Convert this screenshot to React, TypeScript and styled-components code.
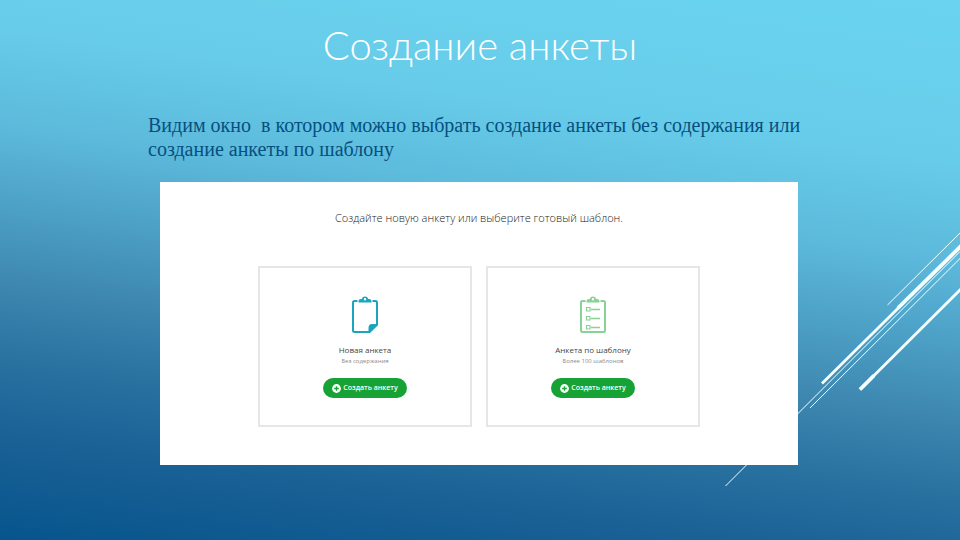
import React from "react";
import styled, { createGlobalStyle } from "styled-components";

const GlobalStyle = createGlobalStyle`
  *, *::before, *::after { box-sizing: border-box; }
  body { margin: 0; }
`;

const Slide = styled.main`
  position: relative;
  min-height: 100vh;
  overflow: hidden;
  padding: 21px 148px 24px;
  background: linear-gradient(
    188deg,
    #6ad4f0 0%,
    #67cce9 24%,
    #5cb9db 39%,
    #4c9fc5 51%,
    #3d87b0 62%,
    #28709f 74%,
    #175f94 87%,
    #06558d 100%
  );
`;

const Streaks = styled.svg`
  position: absolute;
  inset: 0;
  width: 100%;
  height: 100%;
  stroke: #f4ffff;
  fill: none;
`;

const Content = styled.div`
  position: relative;
`;

const Title = styled.h1`
  margin: 0;
  color: #ffffff;
  font: 300 40px/48px Lato, "Open Sans", sans-serif;
  text-align: center;
`;

const Lead = styled.p`
  margin: 44px 0 0;
  color: #06507f;
  font: 20px/24px "Liberation Serif", serif;
  white-space: pre-wrap;
`;

const Panel = styled.section`
  margin: 21px 14px 0 12px;
  padding: 28px 20px 38px;
  background: #ffffff;
  font-family: "Open Sans", "Noto Sans", sans-serif;
`;

const PanelTitle = styled.h2`
  margin: 0;
  color: #222222;
  font-size: 11px;
  line-height: 16px;
  font-weight: 300;
  text-align: center;
`;

const Cards = styled.div`
  display: grid;
  grid-template-columns: repeat(2, minmax(0, 214px));
  justify-content: center;
  gap: 14px;
  margin-top: 40px;
`;

const Card = styled.article`
  display: flex;
  flex-direction: column;
  align-items: center;
  padding: 28px 8px 27px;
  border: 2px solid #e6e6e6;
`;

const ClipIcon = styled.svg<{ $tone: string }>`
  width: 28px;
  height: 38px;
  color: ${(p) => p.$tone};
  stroke: currentColor;
  fill: none;
`;

const CardTitle = styled.h3`
  margin: 10px 0 0;
  color: #444444;
  font-size: 8px;
  line-height: 12px;
  font-weight: 400;
`;

const CardNote = styled.p`
  margin: 0;
  color: #8a8a8a;
  font-size: 6px;
  line-height: 10px;
`;

const CreateButton = styled.button`
  display: flex;
  align-items: center;
  justify-content: center;
  gap: 2px;
  width: 84px;
  height: 20px;
  margin-top: 12px;
  padding: 0;
  border: 0;
  border-radius: 10px;
  background: #17a235;
  color: #ffffff;
  font: 600 7px/12px "Open Sans", "Noto Sans", sans-serif;
  cursor: pointer;
`;

const PlusIcon = styled.svg`
  width: 9px;
  height: 9px;
`;

function Clip() {
  return (
    <path
      d="M7.500 6.500V5Q7.500 3 10 3H10.800A3.300 3.300 0 0 1 17.200 3H18Q20.500 3 20.500 5V6.500ZM14 2A1.200 1.200 0 1 0 14 4.400A1.200 1.200 0 1 0 14 2Z"
      fill="currentColor"
      fillRule="evenodd"
      stroke="none"
    />
  );
}

function BlankClipboard() {
  return (
    <ClipIcon viewBox="0 0 28 38" $tone="#1ba5bd" aria-hidden="true">
      <path d="M6.500 5H3.500Q2 5 2 6.500V34.500Q2 36 3.500 36H18L26 28.500V6.500Q26 5 24.500 5H21.500" strokeWidth="2" />
      <path d="M17.500 37V32Q17.500 28 21 28H27V29L19 37Z" fill="currentColor" stroke="none" />
      <Clip />
    </ClipIcon>
  );
}

function ListClipboard() {
  return (
    <ClipIcon viewBox="0 0 28 38" $tone="#86d395" aria-hidden="true">
      <path d="M6.500 5H3.500Q2 5 2 6.500V34.500Q2 36 3.500 36H24.500Q26 36 26 34.500V6.500Q26 5 24.500 5H21.500" strokeWidth="2" />
      <path d="M7.500 11.500H11V15H7.500ZM7.500 20.500H11V24H7.500ZM7.500 29.500H11V33H7.500Z" strokeWidth="1.200" />
      <path d="M12 13.500H21M12 22.500H21M12 31.500H21" strokeWidth="1.400" />
      <Clip />
    </ClipIcon>
  );
}

function Create() {
  return (
    <CreateButton type="button">
      <PlusIcon viewBox="0 0 9 9" aria-hidden="true">
        <circle cx="4.500" cy="4.500" r="4.400" fill="#ffffff" />
        <path d="M4.500 2.200V6.800M2.200 4.500H6.800" stroke="#17a235" strokeWidth="1.300" />
      </PlusIcon>
      Создать анкету
    </CreateButton>
  );
}

export default function App() {
  return (
    <>
      <GlobalStyle />
      <Slide>
        <Streaks viewBox="0 0 960 540" preserveAspectRatio="xMaxYMid slice" aria-hidden="true">
          <path d="M887.500 305L960 233M725.500 486L960 251.500M810 408L960 258.500" strokeWidth="1" />
          <path d="M822 383.500L962 245M860 389.500L962 288" strokeWidth="2.800" />
          <path d="M898 308L962 245M860 389.500L874 375.500" strokeWidth="3.800" />
        </Streaks>
        <Content>
          <Title>Создание анкеты</Title>
          <Lead>{"Видим окно  в котором можно выбрать создание анкеты без содержания или создание анкеты по шаблону"}</Lead>
          <Panel>
            <PanelTitle>Создайте новую анкету или выберите готовый шаблон.</PanelTitle>
            <Cards>
              <Card>
                <BlankClipboard />
                <CardTitle>Новая анкета</CardTitle>
                <CardNote>Без содержания</CardNote>
                <Create />
              </Card>
              <Card>
                <ListClipboard />
                <CardTitle>Анкета по шаблону</CardTitle>
                <CardNote>Более 100 шаблонов</CardNote>
                <Create />
              </Card>
            </Cards>
          </Panel>
        </Content>
      </Slide>
    </>
  );
}
